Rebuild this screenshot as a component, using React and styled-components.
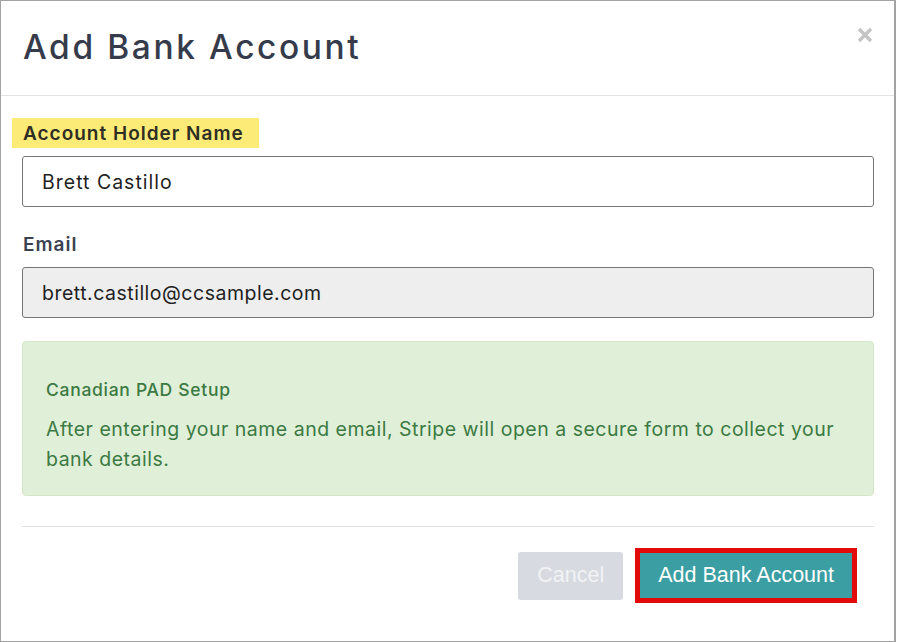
import React from "react";
import styled, { createGlobalStyle } from "styled-components";

const Global = createGlobalStyle`
  html, body { margin: 0; padding: 0; background: #ffffff; }
  body { font-family: "Inter", "Liberation Sans", sans-serif; }
  * { box-sizing: border-box; }
`;

const Modal = styled.div`
  width: 896px;
  height: 642px;
  border: 1px solid #a3a3a3;
  border-right-width: 2px;
  background: #fff;
  display: flex;
  flex-direction: column;
`;

const Header = styled.header`
  height: 95px;
  border-bottom: 1px solid #e3e3e3;
  display: flex;
  align-items: center;
  justify-content: space-between;
  padding: 0 20px 0 22px;
`;

const Title = styled.h1`
  margin: 0 0 2px 0;
  font-family: "Inter", sans-serif;
  font-weight: 500;
  font-size: 33.5px;
  letter-spacing: 2.6px;
  color: #353b4a;
`;

const Close = styled.button`
  border: 0;
  background: none;
  padding: 0;
  margin: -26px 0 0 0;
  width: 18px;
  height: 18px;
  display: flex;
  align-items: center;
  justify-content: center;
  cursor: pointer;
`;

const Body = styled.div`
  padding: 22px 20px 0 21px;
  display: flex;
  flex-direction: column;
`;

const Field = styled.div`
  display: flex;
  flex-direction: column;
  gap: 8px;
  margin-bottom: ${(p) => p.$gap}px;
`;

const Label = styled.label`
  align-self: flex-start;
  height: 30px;
  display: flex;
  align-items: center;
  font-family: "Inter", sans-serif;
  font-weight: 600;
  font-size: 19px;
  letter-spacing: 1px;
  color: ${(p) => (p.$hl ? "#2e2e25" : "#3b4150")};
  background: ${(p) => (p.$hl ? "#fdeb77" : "transparent")};
  margin-left: -10px;
  padding: 0 15px 0 11px;
`;

const Input = styled.input`
  height: 51px;
  width: 100%;
  border: 1px solid #767676;
  border-radius: 3px;
  padding: 0 19px;
  font-family: "Inter", sans-serif;
  font-size: 19.5px;
  letter-spacing: ${(p) => (p.readOnly ? "0.5px" : "1px")};
  color: #1f1f1f;
  background: ${(p) => (p.readOnly ? "#eeeeee" : "#ffffff")};
  outline: none;
`;

const Alert = styled.div`
  margin-top: 1px;
  height: 155px;
  background: #dfefd8;
  border: 1px solid #d2e8c8;
  border-radius: 4px;
  padding: 37px 24px 0 23px;
  color: #3c7a43;
`;

const AlertTitle = styled.div`
  font-family: "Inter", sans-serif;
  font-weight: 500;
  font-size: 17.5px;
  letter-spacing: 0.7px;
  margin-bottom: 14px;
`;

const AlertText = styled.p`
  margin: 0;
  font-family: "Inter", sans-serif;
  font-size: 19.5px;
  letter-spacing: 0.5px;
  line-height: 30px;
`;

const Footer = styled.footer`
  margin: 30px 20px 0 21px;
  border-top: 1px solid #e3e3e3;
  padding: 21px 17px 0 0;
  display: flex;
  justify-content: flex-end;
  align-items: center;
  gap: 12px;
`;

const Button = styled.button`
  font-family: "Liberation Sans", Arial, sans-serif;
  font-size: 21.5px;
  cursor: pointer;
  color: ${(p) => (p.$primary ? "#ffffff" : "#f2f3f6")};
  background: ${(p) => (p.$primary ? "#3a9ea2" : "#d7dae1")};
  border: ${(p) => (p.$primary ? "5px solid #e30a0a" : "0")};
  border-radius: ${(p) => (p.$primary ? "0" : "3px")};
  height: ${(p) => (p.$primary ? "55px" : "48px")};
  padding: ${(p) => (p.$primary ? "0 18px" : "0 19px")};
`;

export default function App() {
  return (
    <>
      <Global />
      <Modal>
        <Header>
          <Title>Add Bank Account</Title>
          <Close aria-label="Close">
            <svg width="16" height="16" viewBox="0 0 16 16">
              <path d="M2 2 L14 14 M14 2 L2 14" stroke="#c4c4c4" strokeWidth="3.4" strokeLinecap="butt" />
            </svg>
          </Close>
        </Header>
        <Body>
          <Field $gap={22}>
            <Label $hl>Account Holder Name</Label>
            <Input defaultValue="Brett Castillo" />
          </Field>
          <Field $gap={22}>
            <Label>Email</Label>
            <Input readOnly defaultValue="brett.castillo@ccsample.com" />
          </Field>
          <Alert>
            <AlertTitle>Canadian PAD Setup</AlertTitle>
            <AlertText>
              After entering your name and email, Stripe will open a secure form to collect your bank details.
            </AlertText>
          </Alert>
        </Body>
        <Footer>
          <Button>Cancel</Button>
          <Button $primary>Add Bank Account</Button>
        </Footer>
      </Modal>
    </>
  );
}
